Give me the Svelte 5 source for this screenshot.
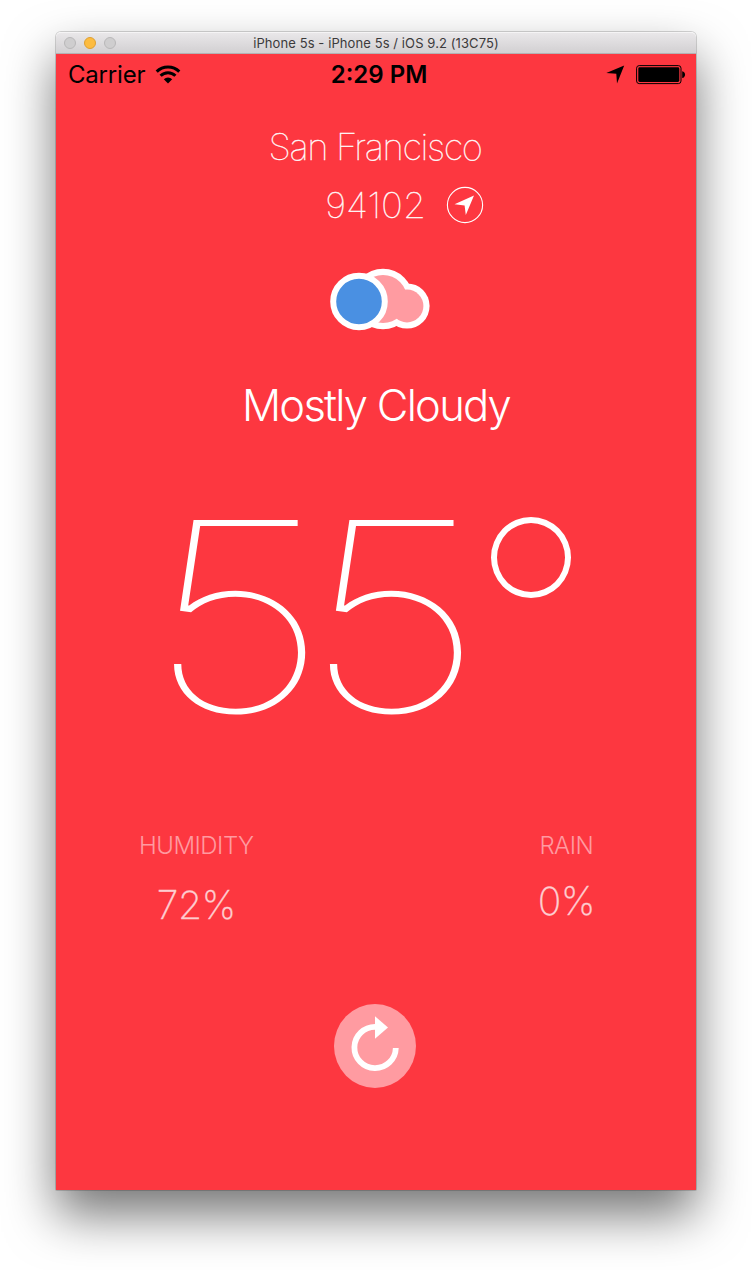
<script>
  const title = 'iPhone 5s - iPhone 5s / iOS 9.2 (13C75)';
  const weather = {
    city: 'San Francisco',
    zip: '94102',
    summary: 'Mostly Cloudy',
    temperature: '55',
    humidity: '72%',
    rain: '0%'
  };
</script>

<div class="desktop">
  <div class="window">
    <header class="titlebar">
      <div class="lights"><i></i><i class="amber"></i><i></i></div>
      <span class="title">{title}</span>
    </header>

    <main class="screen">
      <div class="status">
        <div class="carrier">
          <span>Carrier</span>
          <svg width="26" height="20" viewBox="0 0 26 20">
            <g fill="none" stroke="#000" stroke-width="3">
              <path d="M1.7 6.6a16 16 0 0 1 22.6 0" />
              <path d="M5.6 10.8a10.4 10.4 0 0 1 14.8 0" />
            </g>
            <path d="M8.8 14.2a6 6 0 0 1 8.4 0L13 18.5z" />
          </svg>
        </div>
        <span class="time">2:29 PM</span>
        <div class="indicators">
          <svg width="19" height="19" viewBox="0 0 19 19"><path d="M18.2 .5 11 18.6 10.3 8.7 .3 8z" /></svg>
          <svg width="50" height="20" viewBox="0 0 50 20">
            <rect x=".6" y=".6" width="44.4" height="18" rx="2.6" fill="none" stroke="#000" stroke-width="1" />
            <rect x="2.3" y="2.3" width="41" height="14.6" rx="1.4" />
            <path d="M46.2 6.2c3.8.4 3.8 6.4 0 6.8z" />
          </svg>
        </div>
      </div>

      <h1 class="city"><span>{weather.city}</span></h1>
      <div class="zip">
        <span>{weather.zip}</span>
        <svg width="38" height="38" viewBox="0 0 38 38">
          <circle cx="19" cy="19" r="17.6" fill="none" stroke="#fff" stroke-width="1.1" />
          <path fill="#fff" d="M28 9.5 19.8 29 18.6 19.6 8.5 18.3z" />
        </svg>
      </div>

      <svg class="cloud" width="102" height="64" viewBox="0 0 102 64">
        <g fill="#fff">
          <circle cx="53" cy="32" r="30.2" />
          <circle cx="77" cy="39" r="22.6" />
        </g>
        <g fill="#ff9ba1">
          <circle cx="53" cy="32" r="24" />
          <circle cx="77" cy="39" r="16.4" />
          <path d="M60 25h15v22H60z" />
        </g>
        <circle cx="29" cy="34.5" r="25.8" fill="#4a90e2" stroke="#fff" stroke-width="6" />
      </svg>

      <h2 class="summary"><span>{weather.summary}</span></h2>

      <div class="temperature">
        <span>{weather.temperature}</span><i class="degree"></i>
      </div>

      <section class="details">
        <div class="humidity">
          <h3>HUMIDITY</h3>
          <p>{weather.humidity}</p>
        </div>
        <div class="rain">
          <h3>RAIN</h3>
          <p>{weather.rain}</p>
        </div>
      </section>

      <button class="refresh" aria-label="Refresh">
        <svg width="82" height="84" viewBox="0 0 82 84">
          <ellipse cx="41" cy="42" rx="41" ry="42" fill="#ff9ba1" />
          <path d="M41.5 22.8A20.7 20.7 0 1 0 61.8 44" fill="none" stroke="#fff" stroke-width="5.8" />
          <path d="M41 12.2 54 23.5 41 34.8z" fill="#fff" />
        </svg>
      </button>
    </main>
  </div>
</div>

<style>
  :global(body) { background: #fff; }

  .desktop {
    box-sizing: border-box;
    width: 752px;
    height: 1270px;
    padding: 32px 56px 80px;
    overflow: hidden;
    font-family: Inter, "Liberation Sans", sans-serif;
  }
  .window {
    display: flex;
    flex-direction: column;
    width: 640px;
    height: 1158px;
    border-radius: 5px 5px 1px 1px;
    box-shadow: 0 0 0 1px rgba(0, 0, 0, 0.16), 0 25px 50px rgba(0, 0, 0, 0.54);
  }
  .titlebar {
    box-sizing: border-box;
    display: grid;
    grid-template-columns: 100px 1fr 100px;
    align-items: center;
    height: 22px;
    border-top: 1px solid #f5f4f5;
    border-bottom: 1px solid #b3b1b3;
    border-radius: 5px 5px 0 0;
    background: linear-gradient(#e9e7e9, #d2d0d2);
  }
  .lights { display: flex; gap: 8px; padding-left: 8px; }
  .lights i {
    box-sizing: border-box;
    width: 12px;
    height: 12px;
    border: 1px solid #b9b8b9;
    border-radius: 50%;
    background: #cfcecf;
  }
  .lights .amber { border-color: #dfa032; background: #fdbc40; }
  .title {
    justify-self: center;
    font-size: 13px;
    line-height: 20px;
    letter-spacing: 0.09px;
    white-space: nowrap;
    color: #3b3a3b;
  }

  .screen {
    flex: 1;
    display: flex;
    flex-direction: column;
    align-items: center;
    color: #fff;
    background: #fd3740;
  }
  .status {
    display: grid;
    grid-template-columns: 1fr auto 1fr;
    align-items: center;
    width: 100%;
    height: 40px;
    color: #000;
    font-size: 24px;
    line-height: 40px;
  }
  .status span { padding-top: 1px; }
  .carrier { display: flex; align-items: center; gap: 10px; padding-left: 12px; letter-spacing: -0.2px; }
  .time { font-weight: 600; padding-left: 6px; }
  .indicators { display: flex; align-items: center; justify-content: flex-end; gap: 11px; padding-right: 10px; }

  h1, h2, h3, p { margin: 0; }
  .city {
    margin: 31px 2px 0 0;
    font-size: 36.5px;
    font-weight: 100;
    line-height: 44px;
    letter-spacing: -1.4px;
    -webkit-text-stroke: 0.3px #fff;
  }
  .zip {
    display: flex;
    align-items: center;
    align-self: flex-end;
    gap: 20px;
    margin: 17px 212px 0 0;
    font-size: 35.5px;
    font-weight: 100;
    line-height: 36px;
    -webkit-text-stroke: 0.3px #fff;
  }
  .zip span {
    padding-top: 2px;
    transform: scaleX(1.04);
    transform-origin: right;
  }
  .cloud { margin: 43px 0 0 9px; }
  .summary {
    margin-top: 46px;
    font-size: 43.5px;
    font-weight: 300;
    line-height: 56px;
    letter-spacing: -1.75px;
  }
  .temperature {
    display: flex;
    align-self: flex-start;
    margin: 53px 0 0 91px;
    height: 260px;
    font-size: 264px;
    font-weight: 100;
    line-height: 260px;
  }
  .temperature span {
    letter-spacing: -21px;
    transform: scaleX(1.22);
    transform-origin: left;
  }
  .degree {
    box-sizing: border-box;
    width: 80px;
    height: 81px;
    margin: 31px 0 0 88px;
    border: 6px solid #fff;
    border-radius: 50%;
  }
  .details {
    display: flex;
    justify-content: space-between;
    box-sizing: border-box;
    width: 100%;
    height: 120px;
    margin-top: 84px;
    padding: 0 101px 0 83px;
    text-align: center;
  }
  h3 {
    font-size: 24px;
    font-weight: 300;
    line-height: 32px;
    letter-spacing: -0.5px;
    color: #ff9aa0;
  }
  .details p {
    margin-top: 26px;
    font-size: 39px;
    font-weight: 200;
    line-height: 34px;
    letter-spacing: -0.5px;
    color: #fecdd0;
    -webkit-text-stroke: 0.3px #fecdd0;
  }
  .details .rain p { margin-top: 22px; }
  .refresh {
    display: flex;
    margin: 54px 2px 0 0;
    padding: 0;
    border: 0;
    background: none;
  }
</style>
